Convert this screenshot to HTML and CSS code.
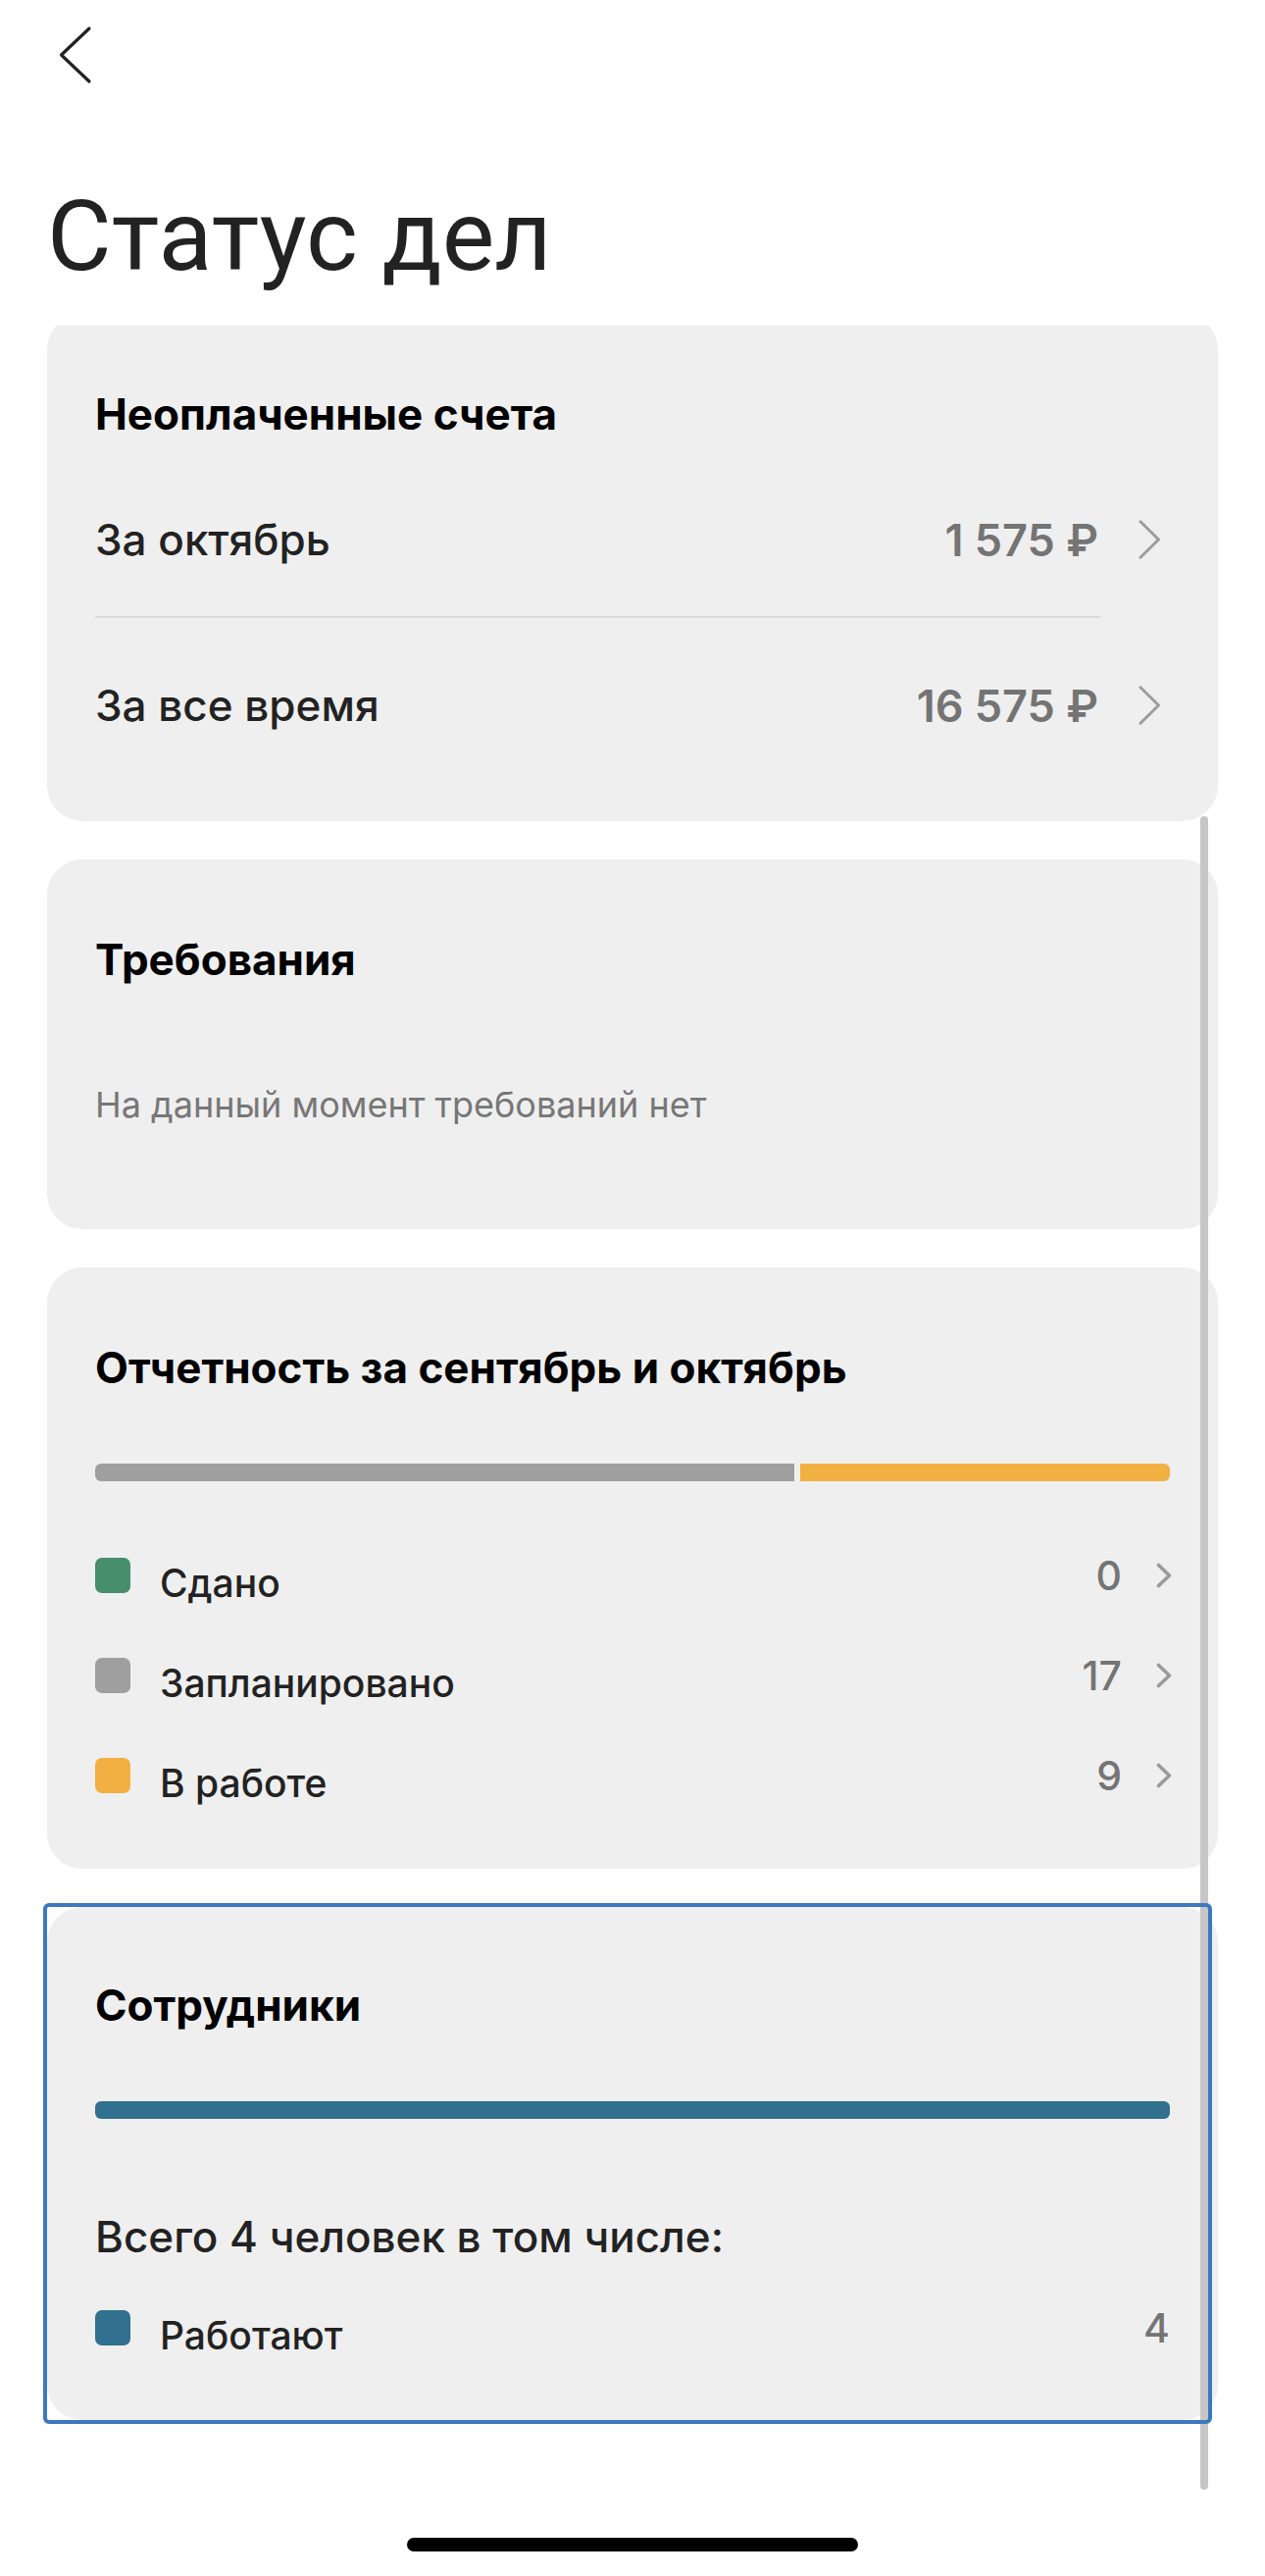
FILE: index.html
```html
<!DOCTYPE html>
<html lang="ru">
<head>
<meta charset="utf-8">
<title>Статус дел</title>
<link rel="stylesheet" href="styles.css">
</head>
<body>
<div class="screen">
  <nav class="nav">
    <button class="back" aria-label="Назад">
      <svg width="36" height="60" viewBox="0 0 36 60"><polyline points="31,3 2.5,30 31,57" fill="none" stroke="#222" stroke-width="3.2" stroke-linecap="round" stroke-linejoin="round"/></svg>
    </button>
  </nav>
  <h1 class="title">Статус дел</h1>
  <main class="scroll">
    <div class="cards">
      <section class="card card-bills">
        <h2 class="card-title">Неоплаченные счета</h2>
        <div class="bill-row">
          <span class="bill-label">За октябрь</span>
          <span class="bill-value">1 575 ₽</span>
          <svg class="bill-chevron" width="23" height="40" viewBox="0 0 23 40"><polyline points="2,1.8 20.5,20 2,38.2" fill="none" stroke="#9c9c9c" stroke-width="3" stroke-linecap="round" stroke-linejoin="round"/></svg>
        </div>
        <div class="divider"></div>
        <div class="bill-row bill-row-last">
          <span class="bill-label">За все время</span>
          <span class="bill-value">16 575 ₽</span>
          <svg class="bill-chevron" width="23" height="40" viewBox="0 0 23 40"><polyline points="2,1.8 20.5,20 2,38.2" fill="none" stroke="#9c9c9c" stroke-width="3" stroke-linecap="round" stroke-linejoin="round"/></svg>
        </div>
      </section>

      <section class="card card-demands">
        <h2 class="card-title">Требования</h2>
        <p class="empty-note">На данный момент требований нет</p>
      </section>

      <section class="card card-reports">
        <h2 class="card-title">Отчетность за сентябрь и октябрь</h2>
        <div class="progress">
          <div class="seg seg-gray" style="flex-grow: 17"></div>
          <div class="seg seg-orange" style="flex-grow: 9"></div>
        </div>
        <ul class="legend">
          <li class="legend-row">
            <span class="swatch swatch-green"></span>
            <span class="legend-label">Сдано</span>
            <span class="legend-value">0</span>
            <svg class="legend-chevron" width="16" height="26" viewBox="0 0 16 26"><polyline points="2.5,2.5 13.5,13 2.5,23.5" fill="none" stroke="#9a9a9a" stroke-width="3.6" stroke-linecap="round" stroke-linejoin="round"/></svg>
          </li>
          <li class="legend-row">
            <span class="swatch swatch-gray"></span>
            <span class="legend-label">Запланировано</span>
            <span class="legend-value">17</span>
            <svg class="legend-chevron" width="16" height="26" viewBox="0 0 16 26"><polyline points="2.5,2.5 13.5,13 2.5,23.5" fill="none" stroke="#9a9a9a" stroke-width="3.6" stroke-linecap="round" stroke-linejoin="round"/></svg>
          </li>
          <li class="legend-row">
            <span class="swatch swatch-orange"></span>
            <span class="legend-label">В работе</span>
            <span class="legend-value">9</span>
            <svg class="legend-chevron" width="16" height="26" viewBox="0 0 16 26"><polyline points="2.5,2.5 13.5,13 2.5,23.5" fill="none" stroke="#9a9a9a" stroke-width="3.6" stroke-linecap="round" stroke-linejoin="round"/></svg>
          </li>
        </ul>
      </section>

      <section class="card card-staff">
        <h2 class="card-title">Сотрудники</h2>
        <div class="progress">
          <div class="seg seg-blue" style="flex-grow: 4"></div>
        </div>
        <p class="staff-total">Всего 4 человек в том числе:</p>
        <ul class="legend">
          <li class="legend-row">
            <span class="swatch swatch-blue"></span>
            <span class="legend-label">Работают</span>
            <span class="legend-value">4</span>
          </li>
        </ul>
      </section>
    </div>
    <div class="scrollbar"></div>
  </main>
  <div class="home-indicator"></div>
</div>
</body>
</html>
```

FILE: styles.css
```css
* {
  box-sizing: border-box;
  margin: 0;
  padding: 0;
}

html,
body {
  background: #ffffff;
}

body {
  width: 1290px;
  height: 2626px;
  overflow: hidden;
  font-family: "Inter", "Noto Sans", sans-serif;
  color: #222222;
}

.screen {
  position: relative;
  width: 1290px;
  height: 2626px;
  display: flex;
  flex-direction: column;
}

.nav {
  height: 86px;
  padding: 26px 0 0 60px;
}

.back {
  display: block;
  width: 36px;
  height: 60px;
  border: 0;
  background: none;
  padding: 0;
}

.back svg {
  display: block;
}

.title {
  margin-top: 106px;
  padding-left: 48px;
  font-family: "Roboto", "Liberation Sans", sans-serif;
  font-weight: 400;
  font-size: 101px;
  line-height: 98px;
  color: #222222;
}

.scroll {
  position: relative;
  flex: 1;
  margin-top: 42px;
  overflow: hidden;
}

.cards {
  display: flex;
  flex-direction: column;
  gap: 39px;
  padding: 0 48px;
  margin-top: -12px;
}

.card {
  background: #efefef;
  border-radius: 36px;
  padding: 74px 49px 0;
}

.card-title {
  font-size: 44px;
  font-weight: 700;
  line-height: 56px;
  color: #000000;
}

/* Bills */
.card-bills {
  padding-bottom: 78px;
}

.bill-row {
  display: flex;
  align-items: center;
  height: 80px;
  margin-top: 60px;
}

.bill-row-last {
  margin-top: 49px;
}

.bill-label {
  flex: 1;
  font-size: 44px;
  font-weight: 500;
  color: #222222;
}

.bill-value {
  font-size: 45px;
  font-weight: 600;
  color: #747474;
}

.bill-chevron {
  display: block;
  margin-left: 41px;
  margin-right: 9px;
}

.divider {
  height: 2px;
  margin-top: 38px;
  margin-right: 71px;
  background: #dadada;
}

/* Demands */
.card-demands {
  padding-bottom: 105px;
}

.empty-note {
  margin-top: 98px;
  font-size: 36px;
  line-height: 44px;
  color: #777777;
}

/* Progress bars */
.progress {
  display: flex;
  gap: 6px;
  height: 18px;
  margin-top: 70px;
  border-radius: 6px;
  overflow: hidden;
}

.seg {
  flex-basis: 0;
  height: 100%;
}

.seg-gray {
  background: #9f9f9f;
}

.seg-orange {
  background: #f3b042;
}

.seg-blue {
  background: #31708e;
}

/* Legend */
.legend {
  list-style: none;
  display: flex;
  flex-direction: column;
  gap: 50px;
  margin-top: 78px;
}

.legend-row {
  display: flex;
  align-items: flex-start;
  height: 52px;
}

.swatch {
  flex: none;
  width: 36px;
  height: 36px;
  border-radius: 7px;
}

.swatch-green {
  background: #468e6c;
}

.swatch-gray {
  background: #9f9f9f;
}

.swatch-orange {
  background: #f3b042;
}

.swatch-blue {
  background: #31708e;
}

.legend-label {
  flex: 1;
  margin-left: 30px;
  font-size: 39px;
  font-weight: 500;
  line-height: 52px;
  color: #222222;
}

.legend-value {
  font-size: 41px;
  font-weight: 500;
  line-height: 36px;
  color: #747474;
}

.legend-chevron {
  display: block;
  margin-top: 5px;
  margin-left: 35px;
  margin-right: -2px;
}

/* Reports */
.card-reports {
  padding-bottom: 61px;
}

/* Staff */
.card-staff {
  position: relative;
  padding-top: 72px;
  padding-bottom: 60px;
}

.card-staff::after {
  content: "";
  position: absolute;
  top: -4px;
  left: -4px;
  right: 6px;
  bottom: -4px;
  border: 4px solid #3b78c0;
  border-radius: 6px;
  pointer-events: none;
  z-index: 2;
}

.staff-total {
  margin-top: 92px;
  font-size: 44px;
  font-weight: 500;
  line-height: 56px;
  color: #222222;
}

.card-staff .legend {
  margin-top: 47px;
}

/* Overlays */
.scrollbar {
  position: absolute;
  top: 500px;
  left: 1224px;
  width: 8px;
  height: 1706px;
  border-radius: 4px;
  background: #c6c6c6;
  z-index: 1;
}

.home-indicator {
  position: absolute;
  left: 50%;
  bottom: 25px;
  width: 460px;
  height: 14px;
  margin-left: -230px;
  border-radius: 7px;
  background: #000000;
}
```
